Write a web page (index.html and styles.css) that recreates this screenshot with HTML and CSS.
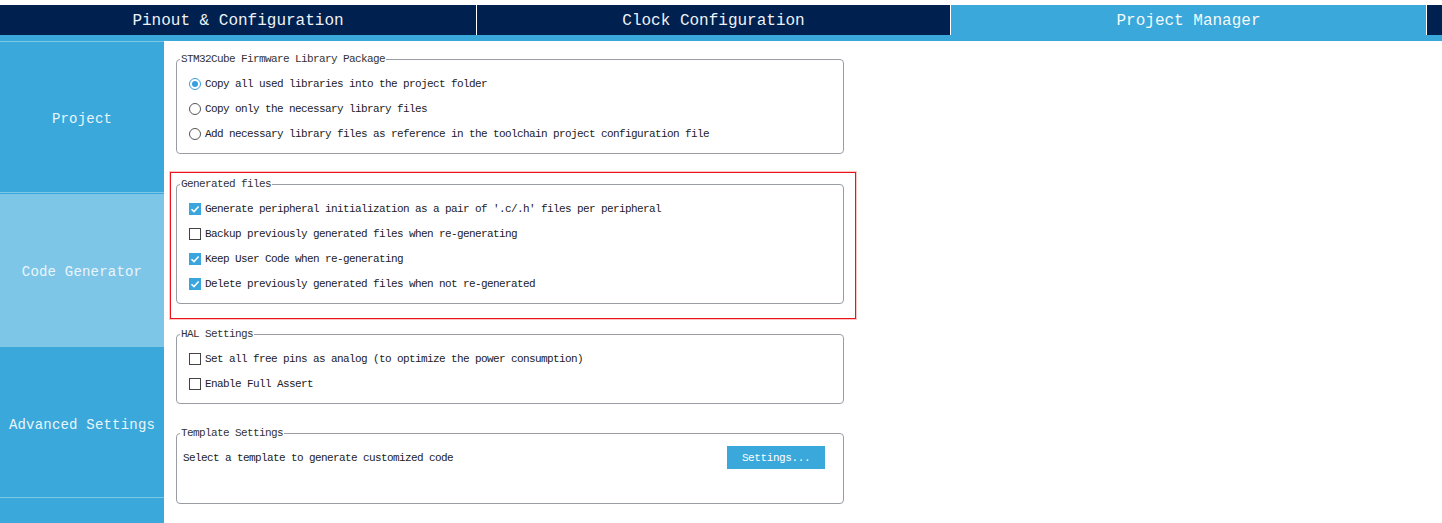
FILE: index.html
```html
<!DOCTYPE html>
<html>
<head>
<meta charset="utf-8">
<link rel="stylesheet" href="styles.css">
</head>
<body>
<header class="topbar">
  <nav class="tabs">
    <div class="tab tab-1">Pinout &amp; Configuration</div>
    <div class="tab tab-2">Clock Configuration</div>
    <div class="tab tab-3 active">Project Manager</div>
    <div class="tab tab-rest"></div>
  </nav>
  <div class="strip"></div>
</header>
<main class="main">
  <aside class="sidebar">
    <div class="side-item side-project">Project</div>
    <div class="side-item side-code active">Code Generator</div>
    <div class="side-item side-adv">Advanced Settings</div>
    <div class="side-item side-rest"></div>
  </aside>
  <section class="content">
    <fieldset class="group group-lib">
      <legend>STM32Cube Firmware Library Package</legend>
      <div class="row"><span class="radio on"></span><span>Copy all used libraries into the project folder</span></div>
      <div class="row"><span class="radio"></span><span>Copy only the necessary library files</span></div>
      <div class="row"><span class="radio"></span><span>Add necessary library files as reference in the toolchain project configuration file</span></div>
    </fieldset>

    <div class="highlight">
      <fieldset class="group group-gen">
        <legend>Generated files</legend>
        <div class="row"><span class="check on"><svg viewBox="0 0 12 12" width="12" height="12"><path d="M2.5 6.2 L5 8.6 L9.6 3.4" fill="none" stroke="#fff" stroke-width="1.5"/></svg></span><span>Generate peripheral initialization as a pair of '.c/.h' files per peripheral</span></div>
        <div class="row"><span class="check"></span><span>Backup previously generated files when re-generating</span></div>
        <div class="row"><span class="check on"><svg viewBox="0 0 12 12" width="12" height="12"><path d="M2.5 6.2 L5 8.6 L9.6 3.4" fill="none" stroke="#fff" stroke-width="1.5"/></svg></span><span>Keep User Code when re-generating</span></div>
        <div class="row"><span class="check on"><svg viewBox="0 0 12 12" width="12" height="12"><path d="M2.5 6.2 L5 8.6 L9.6 3.4" fill="none" stroke="#fff" stroke-width="1.5"/></svg></span><span>Delete previously generated files when not re-generated</span></div>
      </fieldset>
    </div>

    <fieldset class="group group-hal">
      <legend>HAL Settings</legend>
      <div class="row"><span class="check"></span><span>Set all free pins as analog (to optimize the power consumption)</span></div>
      <div class="row"><span class="check"></span><span>Enable Full Assert</span></div>
    </fieldset>

    <fieldset class="group group-tpl">
      <legend>Template Settings</legend>
      <div class="row row-tpl"><span>Select a template to generate customized code</span><button class="btn">Settings...</button></div>
    </fieldset>
  </section>
</main>
</body>
</html>
```

FILE: styles.css
```css
* { box-sizing: border-box; }
html, body { margin: 0; padding: 0; background: #fff; }
body {
  width: 1442px;
  height: 523px;
  overflow: hidden;
  font-family: "Liberation Mono", monospace;
  color: #222;
}

.topbar { padding-top: 5px; }
.tabs {
  display: flex;
  height: 30px;
  background: #00204f;
}
.tab {
  display: flex;
  align-items: center;
  justify-content: center;
  color: #eef2f7;
  font-size: 16px;
  border-right: 1px solid #fff;
  padding-top: 1px;
}
.tab-1 { flex: 0 0 477px; }
.tab-2 { flex: 0 0 474px; }
.tab-3 { flex: 0 0 476px; }
.tab-rest { flex: 1 1 auto; border-right: 0; }
.tab.active { background: #3aa8da; color: #f4fafd; }
.strip { height: 6px; background: #3aa8da; }

.main { display: flex; height: 482px; }

.sidebar {
  flex: 0 0 164px;
  display: flex;
  flex-direction: column;
  background: #3aa8da;
}
.side-item {
  display: flex;
  align-items: center;
  justify-content: center;
  color: #eaf5fb;
  font-size: 14px;
  letter-spacing: 0.2px;
  padding-top: 4px;
}
.side-project { height: 151px; border-top: 1px solid #7cc6e8; }
.side-code { height: 155px; border-top: 1px solid #7cc6e8; background: #7ec6e8; box-shadow: inset 0 1px 0 #3aa8da; }
.side-adv { height: 150px; padding-top: 5px; }
.side-rest { flex: 1 1 auto; border-top: 1px solid #7cc6e8; }

.content {
  flex: 1 1 auto;
  display: flex;
  flex-direction: column;
  align-items: flex-start;
  padding-left: 12px;
}

.group {
  width: 668px;
  margin: 0;
  padding: 5px 0 7px 0;
  border: 1px solid #9a9ea3;
  border-radius: 4px;
  font-size: 11px;
  letter-spacing: -0.6px;
  color: #222;
}
.group legend {
  margin-left: 3px;
  padding: 0 1px;
  line-height: 14px;
  height: 14px;
  color: #333;
}
.group-lib { margin-top: 11px; }
.group-hal { margin-top: 8px; }
.group-tpl { margin-top: 22px; padding-bottom: 33px; }

.highlight {
  margin-top: 18px;
  margin-left: -6px;
  padding: 4px 11px 14px 5px;
  border: 1px solid #e8141a;
  box-shadow: 0 0 0 1px rgba(255, 90, 90, 0.35);
}

.row {
  display: flex;
  align-items: center;
  height: 25px;
  padding-left: 12px;
  gap: 4px;
  white-space: nowrap;
}
.row-tpl { padding-left: 6px; padding-right: 18px; justify-content: space-between; }

.radio {
  width: 12px;
  height: 12px;
  border: 1px solid #555;
  border-radius: 50%;
  background: #fff;
  flex: 0 0 12px;
  display: flex;
  align-items: center;
  justify-content: center;
}
.radio.on { border-color: #3a9ede; }
.radio.on::after {
  content: "";
  width: 6px;
  height: 6px;
  border-radius: 50%;
  background: #3a9ede;
}

.check {
  width: 12px;
  height: 12px;
  flex: 0 0 12px;
  border: 1px solid #444;
  background: #fff;
  display: flex;
}
.check.on { border: 0; background: #3ba6dd; }
.check svg { display: block; }

.btn {
  width: 98px;
  height: 23px;
  border: 0;
  background: #3aa8da;
  color: #fff;
  font-family: "Liberation Mono", monospace;
  font-size: 11px;
  letter-spacing: -0.4px;
  padding: 0;
  cursor: pointer;
}
```
